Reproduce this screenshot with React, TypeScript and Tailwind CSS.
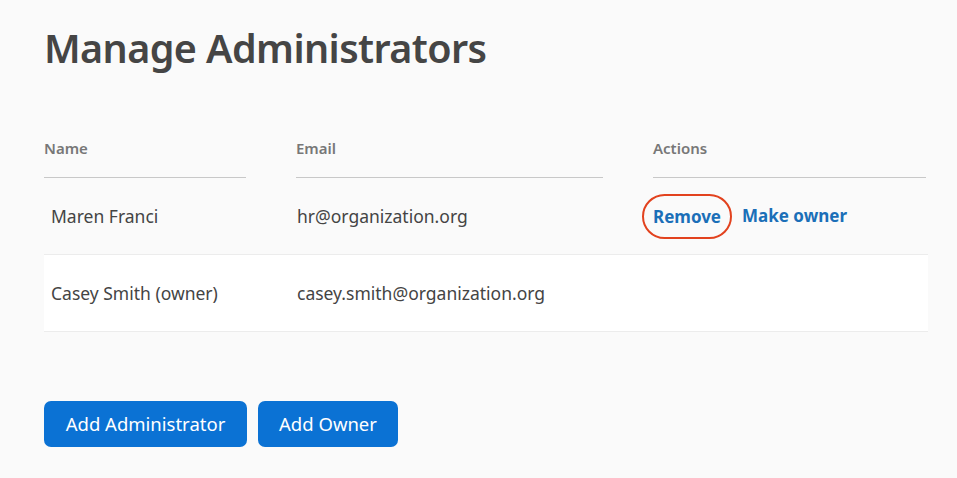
import React from "react";

const font = { fontFamily: '"Noto Sans", "Open Sans", sans-serif' };

export default function App() {
  return (
    <div className="min-h-[478px] w-full bg-[#fafafa] text-[#444]" style={font}>
      <div className="pl-[44px] pt-[22px]">
        <h1 className="text-[39.5px] font-semibold leading-[52px] text-[#454545] tracking-[-0.6px]">
          Manage Administrators
        </h1>
        <div className="mt-[64px] w-[884px]">
          <div className="grid grid-cols-[202px_307px_273px] gap-x-[50px]">
            {["Name", "Email", "Actions"].map((h) => (
              <div
                key={h}
                className="border-b border-[#c8c8c8] pb-[19px] text-[15px] font-semibold leading-[20px] text-[#777]"
              >
                {h}
              </div>
            ))}
          </div>
          <div className="grid h-[77px] grid-cols-[202px_307px_273px] items-center gap-x-[50px] border-b border-[#ececec] text-[17.5px]">
            <div className="pl-[7px]">Maren Franci</div>
            <div className="pl-[1px]">hr@organization.org</div>
            <div className="flex items-center gap-[10px] text-[17px] font-bold text-[#1b6fb8]">
              <span className="-ml-[11px] rounded-full border-2 border-[#e2421e] px-[9px] py-[8px] leading-[25px]">
                Remove
              </span>
              <span>Make owner</span>
            </div>
          </div>
          <div className="grid h-[77px] grid-cols-[202px_307px_273px] items-center gap-x-[50px] border-b border-[#ececec] bg-white text-[17.5px]">
            <div className="pl-[7px]">Casey Smith (owner)</div>
            <div className="pl-[1px]">casey.smith@organization.org</div>
            <div />
          </div>
        </div>
        <div className="mt-[69px] flex gap-[11px]">
          <button className="h-[46px] w-[203px] rounded-[7px] bg-[#0b72d4] text-[18.5px] text-white">
            Add Administrator
          </button>
          <button className="h-[46px] w-[140px] rounded-[7px] bg-[#0b72d4] text-[18.5px] text-white">
            Add Owner
          </button>
        </div>
      </div>
    </div>
  );
}
